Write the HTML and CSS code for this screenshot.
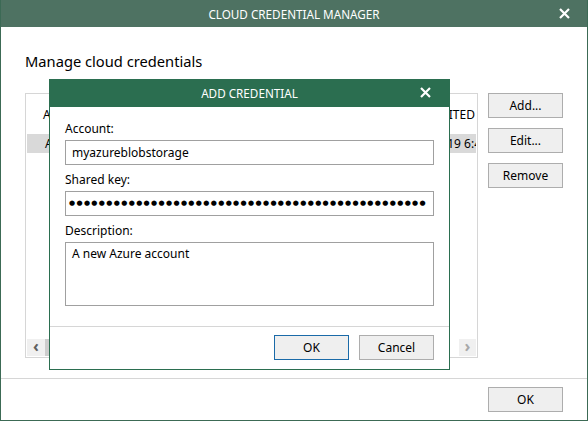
FILE: index.html
```html
<!DOCTYPE html>
<html lang="en">
<head>
    <meta charset="UTF-8">
    <title>Cloud Credential Manager</title>
    <link rel="stylesheet" href="styles.css">
</head>
<body>
    <div class="window">
        <div class="titlebar">
            <span class="title">CLOUD CREDENTIAL MANAGER</span>
            <svg class="close" width="11" height="11" viewBox="0 0 11 11">
                <path d="M1 1 L10 10 M10 1 L1 10" stroke="#fff" stroke-width="2.2" fill="none"/>
            </svg>
        </div>

        <div class="content">
            <h1 class="heading">Manage cloud credentials</h1>

            <div class="main-row">
                <div class="listbox">
                    <div class="grid-area">
                        <table class="grid">
                            <thead>
                                <tr>
                                    <th class="col-account">ACCOUNT</th>
                                    <th class="col-desc">DESCRIPTION</th>
                                    <th class="col-date">LAST EDITED</th>
                                </tr>
                            </thead>
                            <tbody>
                                <tr class="selected">
                                    <td>Azure storage</td>
                                    <td>Azure blob</td>
                                    <td>1/22/2019 6:45 PM</td>
                                </tr>
                            </tbody>
                        </table>
                    </div>
                    <div class="hscroll">
                        <span class="arrow">&#x2039;</span>
                        <span class="thumb"></span>
                        <span class="track"></span>
                        <span class="arrow dim">&#x203A;</span>
                    </div>
                </div>

                <div class="side-buttons">
                    <button class="btn">Add...</button>
                    <button class="btn">Edit...</button>
                    <button class="btn">Remove</button>
                </div>
            </div>
        </div>

        <div class="footer">
            <button class="btn">OK</button>
        </div>

        <div class="dialog">
            <div class="dialog-titlebar">
                <span class="title">ADD CREDENTIAL</span>
                <svg class="close" width="11" height="11" viewBox="0 0 11 11">
                    <path d="M1 1 L10 10 M10 1 L1 10" stroke="#fff" stroke-width="2.2" fill="none"/>
                </svg>
            </div>
            <div class="dialog-body">
                <label class="field-label">Account:</label>
                <input class="field" type="text" value="myazureblobstorage">

                <label class="field-label">Shared key:</label>
                <div class="field secret"><span>●●●●●●●●</span><span>●●●●●●●●</span><span>●●●●●●●●</span><span>●●●●●●●●</span><span>●●●●●●●●</span><span>●●●●●●●●</span></div>

                <label class="field-label">Description:</label>
                <textarea class="field area">A new Azure account</textarea>
            </div>
            <div class="dialog-footer">
                <button class="btn default">OK</button>
                <button class="btn">Cancel</button>
            </div>
        </div>
    </div>
</body>
</html>
```

FILE: styles.css
```css
:root {
    --title-bg: #4e7262;
    --dialog-title-bg: #2b6e50;
    --frame: #3c6a55;
    --btn-bg: #efefef;
    --btn-border: #adadad;
    --line: #d6d6d6;
}

* {
    box-sizing: border-box;
}

body {
    margin: 0;
    font-family: 'Noto Sans', 'Open Sans', sans-serif;
    font-size: 12px;
    color: #000;
    background: #fff;
}

.window {
    position: relative;
    width: 588px;
    height: 421px;
    border: 1px solid var(--frame);
    border-top: none;
    display: flex;
    flex-direction: column;
    overflow: hidden;
}

.titlebar,
.dialog-titlebar {
    position: relative;
    display: flex;
    align-items: center;
    justify-content: center;
    color: #fff;
    font-size: 11.7px;
}

.titlebar {
    height: 27px;
    margin: 0 -1px;
    background: var(--title-bg);
}

.close {
    position: absolute;
    top: 8px;
}

.titlebar .close {
    right: 18px;
}

.content {
    flex: 1;
    padding: 0 24px 0 24px;
}

.heading {
    margin: 24px 0 22px;
    font-size: 14.7px;
    font-weight: normal;
    line-height: 20px;
}

.main-row {
    display: flex;
    gap: 10px;
}

.listbox {
    width: 453px;
    height: 265px;
    border: 1px solid var(--line);
    padding: 1px;
    display: flex;
    flex-direction: column;
    overflow: hidden;
}

.grid-area {
    flex: 1;
    overflow: hidden;
}

.grid {
    border-collapse: collapse;
    table-layout: fixed;
    width: 520px;
}

.grid th {
    height: 39px;
    font-weight: normal;
    text-align: left;
    padding: 0 0 0 16px;
    white-space: nowrap;
}

.grid td {
    height: 19px;
    padding: 0 0 0 18px;
    white-space: nowrap;
    overflow: hidden;
}

.col-account { width: 180px; }
.col-desc { width: 180px; }
.col-date { width: 160px; }

.grid tr.selected td {
    background: #d9d9d9;
}

.grid tr.selected td:last-child {
    padding-left: 17px;
}

.hscroll {
    height: 17px;
    display: flex;
    align-items: stretch;
}

.hscroll .arrow {
    width: 18px;
    background: #f0f0f0;
    color: #606060;
    font-size: 16px;
    font-weight: bold;
    line-height: 15px;
    text-align: center;
}

.hscroll .arrow.dim {
    width: 17px;
    color: #a8a8a8;
}

.hscroll .thumb {
    width: 380px;
    background: #cdcdcd;
}

.hscroll .track {
    flex: 1;
    background: #fff;
}

.side-buttons {
    display: flex;
    flex-direction: column;
    gap: 10px;
}

.btn {
    width: 75px;
    height: 25px;
    padding: 0;
    font-family: inherit;
    font-size: 12px;
    color: #000;
    background: var(--btn-bg);
    border: 1px solid var(--btn-border);
    border-radius: 0;
}

.btn.default {
    border-color: #1a6aa8;
}

.footer {
    height: 42px;
    border-top: 1px solid var(--line);
    display: flex;
    justify-content: flex-end;
    align-items: center;
    padding: 0 24px 1px 0;
}

/* overlay dialog */
.dialog {
    position: absolute;
    left: 48px;
    top: 79px;
    width: 401px;
    height: 291px;
    background: #fff;
    border: 1px solid var(--dialog-title-bg);
    border-top: none;
    display: flex;
    flex-direction: column;
}

.dialog-titlebar {
    height: 28px;
    margin: 0 -1px;
    background: var(--dialog-title-bg);
}

.dialog-titlebar .close {
    right: 19px;
    top: 8px;
}

.dialog-body {
    flex: 1;
    padding: 14px 15px 0 15px;
    display: flex;
    flex-direction: column;
}

.field-label {
    line-height: 16px;
    margin-bottom: 3px;
}

.field {
    width: 369px;
    height: 25px;
    margin: 0 0 7px;
    padding: 0 6px;
    border: 1px solid #a0a0a0;
    font-family: inherit;
    font-size: 12px;
    color: #000;
    outline: none;
    background: #fff;
}

.secret {
    font-family: 'DejaVu Sans', sans-serif;
    font-size: 7px;
    line-height: 23px;
    letter-spacing: 1.35px;
    padding: 0 3px;
    white-space: nowrap;
    overflow: hidden;
}

.area {
    height: 64px;
    padding: 3px 6px;
    resize: none;
    line-height: 16px;
}

.dialog-footer {
    height: 43px;
    border-top: 1px solid var(--line);
    display: flex;
    justify-content: flex-end;
    gap: 10px;
    padding: 8px 15px 0 0;
}
```
